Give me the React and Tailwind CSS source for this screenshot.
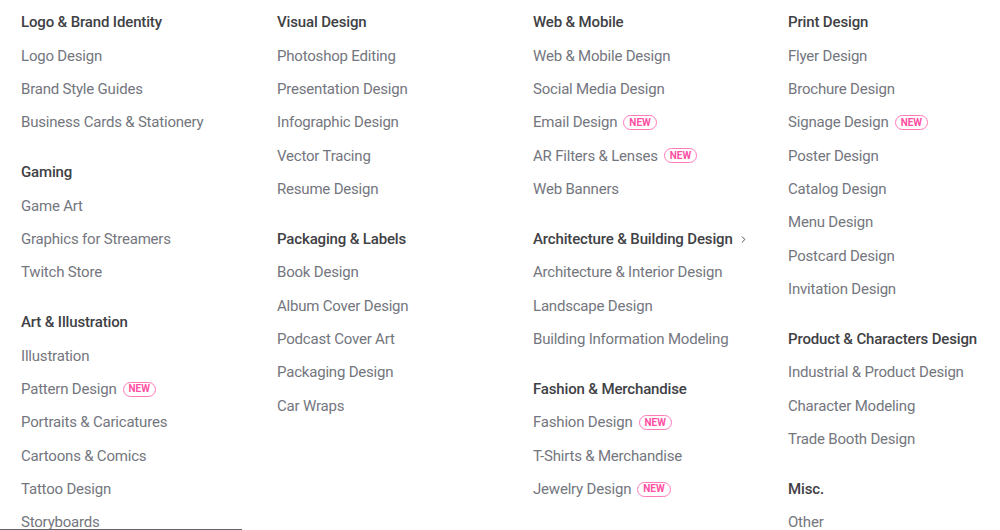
import { ChevronRight } from "lucide-react";

const columns = [
  [
    { title: "Logo & Brand Identity", items: ["Logo Design", "Brand Style Guides", "Business Cards & Stationery"] },
    { title: "Gaming", items: ["Game Art", "Graphics for Streamers", "Twitch Store"] },
    {
      title: "Art & Illustration",
      items: ["Illustration", { label: "Pattern Design", isNew: true }, "Portraits & Caricatures", "Cartoons & Comics", "Tattoo Design", "Storyboards"],
    },
  ],
  [
    {
      title: "Visual Design",
      items: ["Photoshop Editing", "Presentation Design", "Infographic Design", "Vector Tracing", "Resume Design"],
    },
    {
      title: "Packaging & Labels",
      items: ["Book Design", "Album Cover Design", "Podcast Cover Art", "Packaging Design", "Car Wraps"],
    },
  ],
  [
    {
      title: "Web & Mobile",
      items: [
        "Web & Mobile Design",
        "Social Media Design",
        { label: "Email Design", isNew: true },
        { label: "AR Filters & Lenses", isNew: true },
        "Web Banners",
      ],
    },
    {
      title: "Architecture & Building Design",
      arrow: true,
      items: ["Architecture & Interior Design", "Landscape Design", "Building Information Modeling"],
    },
    {
      title: "Fashion & Merchandise",
      items: [{ label: "Fashion Design", isNew: true }, "T-Shirts & Merchandise", { label: "Jewelry Design", isNew: true }],
    },
  ],
  [
    {
      title: "Print Design",
      items: [
        "Flyer Design",
        "Brochure Design",
        { label: "Signage Design", isNew: true },
        "Poster Design",
        "Catalog Design",
        "Menu Design",
        "Postcard Design",
        "Invitation Design",
      ],
    },
    {
      title: "Product & Characters Design",
      items: ["Industrial & Product Design", "Character Modeling", "Trade Booth Design"],
    },
    { title: "Misc.", items: ["Other"] },
  ],
];

function NewBadge() {
  return (
    <span className="ml-[6px] inline-flex h-[15px] items-center rounded-full border border-[#ff7ab9] px-[5px] text-[10px] font-bold leading-none tracking-normal text-[#ff4fa3]">
      NEW
    </span>
  );
}

function Group({ group }) {
  return (
    <div className="mb-[16.67px]">
      <div className="flex h-[33.33px] items-center text-[15px] font-medium tracking-[-0.15px] text-[#404145]">
        {group.title}
        {group.arrow && <ChevronRight size={11} strokeWidth={2} className="ml-[5px] text-[#404145]" />}
      </div>
      {group.items.map((item) => {
        const label = typeof item === "string" ? item : item.label;
        const isNew = typeof item !== "string" && item.isNew;
        return (
          <div key={label} className="flex h-[33.33px] items-center text-[15px] tracking-[-0.2px] text-[#74767e]">
            {label}
            {isNew && <NewBadge />}
          </div>
        );
      })}
    </div>
  );
}

export default function App() {
  return (
    <div className="relative h-[530px] w-[1000px] overflow-hidden bg-white" style={{ fontFamily: "Roboto, 'Noto Sans', sans-serif" }}>
      <div className="grid grid-cols-[256px_256px_255px_1fr] pl-[21px] pt-[6px]">
        {columns.map((col, i) => (
          <div key={i} className="flex flex-col">
            {col.map((g) => (
              <Group key={g.title} group={g} />
            ))}
          </div>
        ))}
      </div>
      {/* bottom scroll line */}
      <div className="absolute bottom-0 left-0 h-px w-[242px] bg-[#62646a]" />
    </div>
  );
}
